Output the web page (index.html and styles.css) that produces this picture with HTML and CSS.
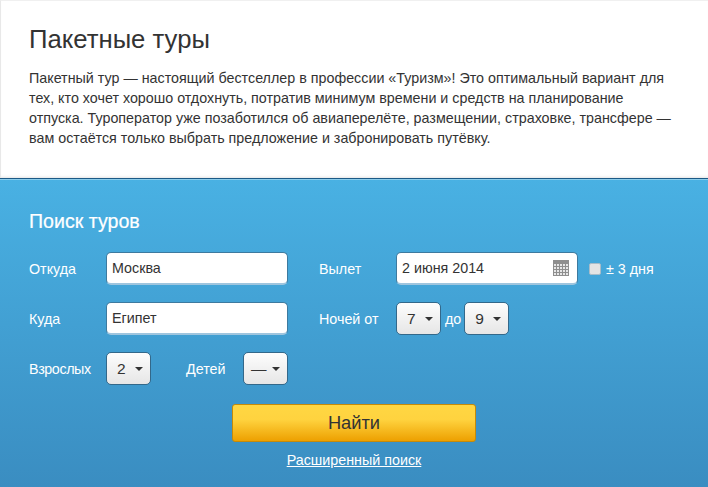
FILE: index.html
```html
<!DOCTYPE html>
<html lang="ru">
<head>
<meta charset="utf-8">
<title>Пакетные туры</title>
<link rel="stylesheet" href="styles.css">
</head>
<body>
<section class="intro">
  <h1 class="intro-title">Пакетные туры</h1>
  <p class="intro-text">Пакетный тур — настоящий бестселлер в профессии «Туризм»! Это оптимальный вариант для тех, кто хочет хорошо отдохнуть, потратив минимум времени и средств на планирование отпуска. Туроператор уже позаботился об авиаперелёте, размещении, страховке, трансфере — вам остаётся только выбрать предложение и забронировать путёвку.</p>
</section>
<section class="search">
  <h2 class="search-title">Поиск туров</h2>
  <div class="row">
    <span class="label label-first">Откуда</span>
    <div class="field">Москва</div>
    <span class="label label-second">Вылет</span>
    <div class="field field-date">2 июня 2014
      <svg class="cal" width="16" height="16" viewBox="0 0 16 16"><rect width="16" height="16" fill="#8e8e8e"/><g fill="#e6e6e6"><rect x="1" y="4" width="2" height="2"/><rect x="4" y="4" width="2" height="2"/><rect x="7" y="4" width="2" height="2"/><rect x="10" y="4" width="2" height="2"/><rect x="13" y="4" width="2" height="2"/><rect x="1" y="7" width="2" height="2"/><rect x="4" y="7" width="2" height="2"/><rect x="7" y="7" width="2" height="2"/><rect x="10" y="7" width="2" height="2"/><rect x="13" y="7" width="2" height="2"/><rect x="1" y="10" width="2" height="2"/><rect x="4" y="10" width="2" height="2"/><rect x="7" y="10" width="2" height="2"/><rect x="10" y="10" width="2" height="2"/><rect x="13" y="10" width="2" height="2"/><rect x="1" y="13" width="2" height="2"/><rect x="4" y="13" width="2" height="2"/><rect x="7" y="13" width="2" height="2"/><rect x="10" y="13" width="2" height="2"/><rect x="13" y="13" width="2" height="2"/></g></svg>
    </div>
    <span class="check"></span>
    <span class="check-label">± 3 дня</span>
  </div>
  <div class="row">
    <span class="label label-first">Куда</span>
    <div class="field">Египет</div>
    <span class="label label-second">Ночей от</span>
    <div class="select"><span class="select-value">7</span><span class="caret"></span></div>
    <span class="until">до</span>
    <div class="select"><span class="select-value">9</span><span class="caret"></span></div>
  </div>
  <div class="row">
    <span class="label label-first label-tight">Взрослых</span>
    <div class="select"><span class="select-value">2</span><span class="caret"></span></div>
    <span class="label label-kids">Детей</span>
    <div class="select select-dash"><span class="select-value">—</span><span class="caret"></span></div>
  </div>
  <div class="actions">
    <button class="submit" type="button">Найти</button>
    <a class="more" href="#">Расширенный поиск</a>
  </div>
</section>
</body>
</html>
```
FILE: styles.css
```css
* { box-sizing: border-box; }
html, body { margin: 0; height: 487px; overflow: hidden; }
body {
  font-family: "Liberation Sans", Arial, sans-serif;
  font-size: 14.3px;
  color: #333;
  background: #fff;
}
.intro {
  height: 178px;
  padding: 23px 29px 0 28px;
  border-top: 1px solid #f0f0f0;
  border-left: 1px solid #e8e8e8;
  box-shadow: inset 0 -3px 3px -2px #e4e4e4;
}
.intro-title {
  margin: 0;
  font-size: 25.7px;
  font-weight: 400;
  line-height: 30px;
  color: #333;
}
.intro-text {
  margin: 14px 0 0;
  width: 650px;
  line-height: 20px;
  color: #333;
}
.search {
  height: 309px;
  padding: 31px 0 0 29px;
  border-top: 1px solid #1c5a86;
  background: linear-gradient(#49b1e3, #3a8dc1);
  box-shadow: inset 0 1px 0 #8bcdec;
  color: #fff;
}
.search-title {
  margin: 0 0 20px;
  font-size: 19.6px;
  font-weight: 400;
  line-height: 22px;
  color: #fff;
  -webkit-text-stroke: 0.2px #fff;
}
.row {
  display: flex;
  align-items: center;
  height: 33px;
  margin-bottom: 17px;
}
.label { flex: none; line-height: 20px; }
.label-first { width: 77px; }
.label-tight { letter-spacing: -0.4px; }
.label-second { width: 77px; margin-left: 31px; }
.label-kids { width: 57px; margin-left: 35px; }
.field {
  position: relative;
  flex: none;
  width: 182px;
  height: 33px;
  padding-left: 5px;
  background: #fff;
  border: 1px solid #3d7a9f;
  border-bottom: 2px solid #9fc5de;
  border-radius: 5px;
  color: #333;
  line-height: 30px;
}
.field-date { display: flex; }
.cal { position: absolute; right: 8px; top: 7px; }
.check {
  flex: none;
  width: 12px;
  height: 12px;
  margin-left: 11px;
  background: #e4e4e4;
  border: 1px solid #a9bcc8;
  border-radius: 2px;
}
.check-label { margin-left: 5px; }
.select {
  display: flex;
  align-items: center;
  flex: none;
  width: 45px;
  height: 33px;
  padding-left: 10px;
  background: linear-gradient(#fdfdfd, #e6e6e6);
  border: 1px solid #33688a;
  border-radius: 5px;
  color: #333;
}
.select-value { width: 18px; font-size: 15.5px; }
.select-dash { padding-left: 7px; }
.select-dash .select-value { width: 21px; }
.caret {
  width: 0;
  height: 0;
  border-left: 4px solid transparent;
  border-right: 4px solid transparent;
  border-top: 4px solid #333;
}
.until { margin: 0 3px 0 4px; }
.actions {
  display: flex;
  flex-direction: column;
  align-items: center;
  width: 650px;
  margin-top: 19px;
}
.submit {
  width: 244px;
  height: 38px;
  padding: 0;
  border: 1px solid #c48a0a;
  border-radius: 3px;
  background: linear-gradient(#ffd743 0%, #ffd33f 40%, #eda000 100%);
  font-family: "Liberation Sans", Arial, sans-serif;
  font-size: 18.3px;
  color: #333;
}
.more {
  margin-top: 9px;
  color: #fff;
  line-height: 18px;
}
```
